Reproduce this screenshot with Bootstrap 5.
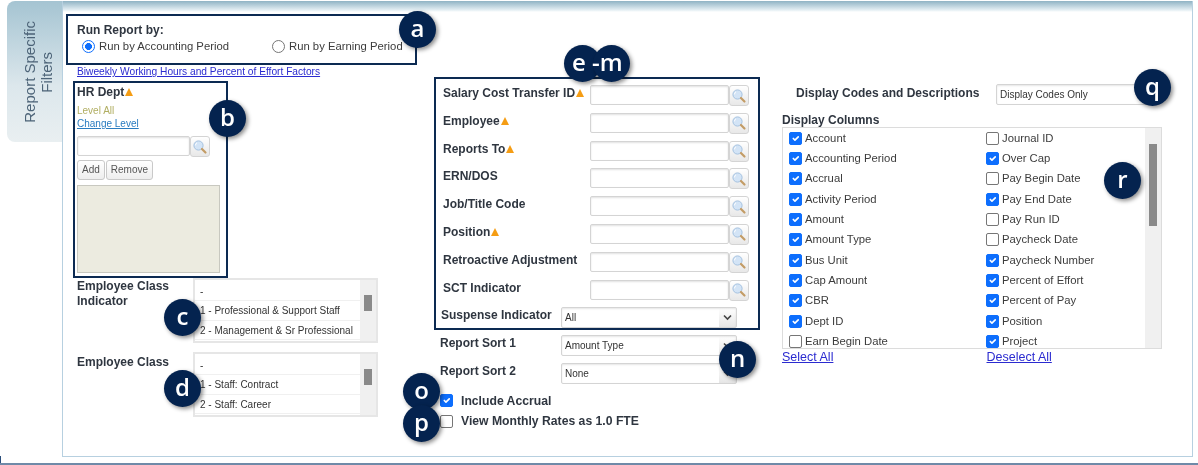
<!DOCTYPE html>
<html lang="en"><head><meta charset="utf-8"><title>Report Specific Filters</title>
<link rel="stylesheet" href="https://cdn.jsdelivr.net/npm/bootstrap@5.3.0/dist/css/bootstrap.min.css">
<style>
html,body{height:465px;overflow:hidden;background:#fff}
body{font-family:"Liberation Sans",Arial,sans-serif;font-size:11px;color:#3c3c3c;position:relative}
.stage{height:465px;border-bottom:2px solid #6f8aa8;display:flex;padding:1px 5px 0 7px;align-items:flex-start;position:relative;filter:blur(.3px)}
.stage::after{content:"";position:absolute;left:0;bottom:0;width:1px;height:7px;background:#2c4f7c}
.side-tab{width:55px;height:141px;border-radius:8px 0 0 8px;background:linear-gradient(#a5c4d2,#dce7ec 60%,#e9eff1);display:flex;align-items:center;justify-content:center;padding-left:6px}
.side-tab span{writing-mode:vertical-rl;transform:rotate(180deg);text-align:center;font-size:15px;line-height:17px;color:#4d6478}
.panel{flex:1;height:456px;border:1px solid #b7d0e0;border-top:0;position:relative;display:flex;background:linear-gradient(#8fb3c4,#e4eef3 9px,#fff 11px)}
.col-a{width:371px;padding:13px 0 0 3px}
.col-b{width:348px;padding-top:76px}
.col-c{flex:1;padding-top:83px}
.navy-box{border:2px solid #0c2a52;background:#fff}
.box-run{width:351px;height:51px;padding:7px 9px}
.heading{font-weight:700;font-size:12px;color:#2f3640;line-height:14px}
.radio-row{display:flex;font-size:11.3px;line-height:16px;margin-top:1px}
.radio-row label{display:flex;align-items:center;gap:4px}
.radio-row label:first-child{width:195px;padding-left:5px}
.form-check-input.tick{width:13px;height:13px;margin:0;flex:none;border:1.5px solid #767676;border-radius:2px}
.form-check-input.tick:checked{background-color:#0d6efd;border-color:#0d6efd}
.form-check-input.dot{width:13px;height:13px;margin:0;flex:none;border:1.5px solid #767676}
.form-check-input.dot:checked{background-color:#fff;border-color:#0d6efd;background-image:radial-gradient(circle,#0d6efd 3.2px,transparent 3.7px)}
.link-top{display:block;margin:0 0 0 11px;font-size:10.2px;line-height:13px;color:#2b2bd0}
.box-dept{width:155px;height:197px;margin:3px 0 0 7px;padding:2px 2px}
.warn{display:inline-block;width:0;height:0;border-left:4.5px solid transparent;border-right:4.5px solid transparent;border-bottom:8px solid #f59d14;margin-left:1px}
.level{color:#b1ae62;font-size:10px;line-height:12px;margin-top:6px}
.change{display:block;color:#2a7cc0;font-size:10px;line-height:13px}
.lookup{display:flex;margin-top:6px}
.field{width:113px;height:20px;border:1px solid #d4d4d4;border-radius:2px;padding:0 3px;box-shadow:inset 0 1px 2px rgba(0,0,0,.12);font-size:11px}
.mag-btn{width:20px;height:21px;padding:0;border:1px solid #d4d4d4;border-radius:3px;background:linear-gradient(#fff,#e8e8e8);display:flex;align-items:center;justify-content:center}
.action-row{display:flex;margin-top:3px}
.btn.act{height:20px;padding:0 4px;font-size:10px;line-height:18px;color:#555;border:1px solid #c9c9c9;border-radius:3px;background:linear-gradient(#fff,#eee)}
.btn.act+.btn.act{margin-left:1px}
.pick-area{width:143px;height:88px;margin-top:5px;background:#ecebe0;border:1px solid #c8c8c0}
.class-row{display:flex;margin:0 0 0 11px}
.class-row+.class-row{margin-top:9px}
.class-row .heading{width:116px;line-height:15px;padding-top:1px}
.class-row+.class-row .heading{padding-top:3px}
.listbox{width:185px;height:65px;border:2px solid #e6e6e6;display:flex;font-size:10px;color:#333;overflow:hidden}
.listbox ul{flex:1;margin:0;padding:2px 0 0;list-style:none;white-space:nowrap}
.listbox li{height:19.4px;line-height:19px;padding-left:5px;border-bottom:1.5px solid #f0f0f0}
.track{width:16px;background:#f0f0f0;padding:15px 4px 0 4px}
.thumb{width:8px;background:#8a8a8a}
.box-fields{width:326px;height:253px;padding:6px 0 0 7px}
.frow{display:flex;align-items:flex-start;height:27.8px}
.frow .heading{width:147px;padding-top:1px;white-space:nowrap}
.frow .field{width:139px;border-radius:2px}
.frow .heading.short{width:120px;margin-left:-2px}
.srow{display:flex;align-items:flex-start;height:27.8px;padding-left:6px}
.srow .heading{width:121px;padding-top:1px;white-space:nowrap}
.form-select.pick{width:176px;height:21px;padding:0 0 0 3px;border:1px solid #d4d4d4;border-radius:2px;font-size:10px;color:#333;font-family:inherit;box-shadow:inset 0 1px 2px rgba(0,0,0,.1);background-repeat:no-repeat;background-size:9px 7px,17px 100%;background-position:right 4px center,right center;background-image:url("data:image/svg+xml,%3csvg xmlns='http://www.w3.org/2000/svg' viewBox='0 0 9 7'%3e%3cpath fill='none' stroke='%23444' stroke-width='1.6' d='M1 1.5l3.5 3.5L8 1.5'/%3e%3c/svg%3e"),linear-gradient(#fff,#e6e6e6)}
.below{margin-top:5px}
.checks{margin:0 0 0 6px}
.checks label{display:flex;align-items:center;gap:8px;height:20.5px;font-weight:700;font-size:12.2px;color:#2f3640}
.codes{display:flex;align-items:flex-start;padding-left:14px}
.codes .heading{width:200px;padding-top:2px}
.codes .form-select{width:155px;background-image:none}
.colhead{margin-top:9px;line-height:13px}
.colbox{width:380px;height:222px;border:1px solid #dcdcdc;display:flex;overflow:hidden}
.colgrid{flex:1;display:grid;grid-template-columns:197px 1fr;grid-auto-rows:20.35px;padding:0 0 0 6px;font-size:11.3px}
.colgrid label{display:flex;align-items:center;gap:3px;white-space:nowrap}
.colbox .track{padding:16px 3px 0 4px}
.colbox .thumb{height:82px}
.sel-links{display:flex;font-size:12.5px;line-height:16px}
.sel-links a{color:#2b2bd0;width:204.5px}
.bub{position:absolute;width:37px;height:37px;border-radius:50%;background:#04234f;color:#fff;font-family:"Open Sans","Liberation Sans",sans-serif;font-weight:600;font-size:24px;line-height:33px;text-align:center;box-shadow:2px 2px 4px rgba(0,0,0,.45);z-index:3}
.bub-text{position:absolute;z-index:4;color:#fff;font-family:"Open Sans","Liberation Sans",sans-serif;font-weight:600;font-size:24px;line-height:33px;white-space:nowrap}
</style></head>
<body>
<svg width="0" height="0" class="position-absolute"><defs><symbol id="mag" viewBox="0 0 16 16"><circle cx="6.5" cy="6.5" r="4.6" fill="#d3e4f6" stroke="#a5c2e0"/><path d="M5 3.8a3 2.6 0 0 0-1.4 2.6" fill="none" stroke="#fff"/><path d="M10 10L13.5 13.5" stroke="#c39c66" stroke-width="2.2" stroke-linecap="round"/></symbol></defs></svg>
<div class="stage">
 <div class="side-tab"><span>Report Specific<br>Filters</span></div>
 <main class="panel">
  <section class="col-a">
   <div class="navy-box box-run">
    <div class="heading">Run Report by:</div>
    <div class="radio-row">
     <label><input class="form-check-input dot" type="radio" name="rp" checked>Run by Accounting Period</label>
     <label><input class="form-check-input dot" type="radio" name="rp">Run by Earning Period</label>
    </div>
   </div>
   <a class="link-top" href="#">Biweekly Working Hours and Percent of Effort Factors</a>
   <div class="navy-box box-dept">
    <div class="heading">HR Dept<span class="warn"></span></div>
    <div class="level">Level All</div>
    <a class="change" href="#">Change Level</a>
    <div class="lookup"><input class="field" type="text"><button class="mag-btn" type="button"><svg width="16" height="16"><use href="#mag"/></svg></button></div>
    <div class="action-row"><button class="btn act" type="button">Add</button><button class="btn act" type="button">Remove</button></div>
    <div class="pick-area"></div>
   </div>
   <div class="class-row">
    <div class="heading">Employee Class Indicator</div>
    <div class="listbox"><ul><li>-</li><li>1 - Professional &amp; Support Staff</li><li>2 - Management &amp; Sr Professional</li></ul><div class="track"><div class="thumb" style="height:16px"></div></div></div>
   </div>
   <div class="class-row">
    <div class="heading">Employee Class</div>
    <div class="listbox"><ul><li>-</li><li>1 - Staff: Contract</li><li>2 - Staff: Career</li></ul><div class="track"><div class="thumb" style="height:16px"></div></div></div>
   </div>
  </section>
  <section class="col-b">
   <div class="navy-box box-fields">
    <div class="frow"><div class="heading">Salary Cost Transfer ID<span class="warn"></span></div><input class="field" type="text"><button class="mag-btn" type="button"><svg width="16" height="16"><use href="#mag"/></svg></button></div>
    <div class="frow"><div class="heading">Employee<span class="warn"></span></div><input class="field" type="text"><button class="mag-btn" type="button"><svg width="16" height="16"><use href="#mag"/></svg></button></div>
    <div class="frow"><div class="heading">Reports To<span class="warn"></span></div><input class="field" type="text"><button class="mag-btn" type="button"><svg width="16" height="16"><use href="#mag"/></svg></button></div>
    <div class="frow"><div class="heading">ERN/DOS</div><input class="field" type="text"><button class="mag-btn" type="button"><svg width="16" height="16"><use href="#mag"/></svg></button></div>
    <div class="frow"><div class="heading">Job/Title Code</div><input class="field" type="text"><button class="mag-btn" type="button"><svg width="16" height="16"><use href="#mag"/></svg></button></div>
    <div class="frow"><div class="heading">Position<span class="warn"></span></div><input class="field" type="text"><button class="mag-btn" type="button"><svg width="16" height="16"><use href="#mag"/></svg></button></div>
    <div class="frow"><div class="heading">Retroactive Adjustment</div><input class="field" type="text"><button class="mag-btn" type="button"><svg width="16" height="16"><use href="#mag"/></svg></button></div>
    <div class="frow"><div class="heading">SCT Indicator</div><input class="field" type="text"><button class="mag-btn" type="button"><svg width="16" height="16"><use href="#mag"/></svg></button></div>
    <div class="frow"><div class="heading short">Suspense Indicator</div><select class="form-select pick"><option>All</option></select></div>
   </div>
   <div class="below">
    <div class="srow"><div class="heading">Report Sort 1</div><select class="form-select pick"><option>Amount Type</option></select></div>
    <div class="srow"><div class="heading">Report Sort 2</div><select class="form-select pick"><option>None</option></select></div>
    <div class="checks">
     <label><input class="form-check-input tick" type="checkbox" checked>Include Accrual</label>
     <label><input class="form-check-input tick" type="checkbox">View Monthly Rates as 1.0 FTE</label>
    </div>
   </div>
  </section>
  <section class="col-c">
   <div class="codes"><div class="heading">Display Codes and Descriptions</div><select class="form-select pick"><option>Display Codes Only</option></select></div>
   <div class="heading colhead">Display Columns</div>
   <div class="colbox">
    <div class="colgrid">
     <label><input class="form-check-input tick" type="checkbox" checked>Account</label><label><input class="form-check-input tick" type="checkbox">Journal ID</label>
     <label><input class="form-check-input tick" type="checkbox" checked>Accounting Period</label><label><input class="form-check-input tick" type="checkbox" checked>Over Cap</label>
     <label><input class="form-check-input tick" type="checkbox" checked>Accrual</label><label><input class="form-check-input tick" type="checkbox">Pay Begin Date</label>
     <label><input class="form-check-input tick" type="checkbox" checked>Activity Period</label><label><input class="form-check-input tick" type="checkbox" checked>Pay End Date</label>
     <label><input class="form-check-input tick" type="checkbox" checked>Amount</label><label><input class="form-check-input tick" type="checkbox">Pay Run ID</label>
     <label><input class="form-check-input tick" type="checkbox" checked>Amount Type</label><label><input class="form-check-input tick" type="checkbox">Paycheck Date</label>
     <label><input class="form-check-input tick" type="checkbox" checked>Bus Unit</label><label><input class="form-check-input tick" type="checkbox" checked>Paycheck Number</label>
     <label><input class="form-check-input tick" type="checkbox" checked>Cap Amount</label><label><input class="form-check-input tick" type="checkbox" checked>Percent of Effort</label>
     <label><input class="form-check-input tick" type="checkbox" checked>CBR</label><label><input class="form-check-input tick" type="checkbox" checked>Percent of Pay</label>
     <label><input class="form-check-input tick" type="checkbox" checked>Dept ID</label><label><input class="form-check-input tick" type="checkbox" checked>Position</label>
     <label><input class="form-check-input tick" type="checkbox">Earn Begin Date</label><label><input class="form-check-input tick" type="checkbox" checked>Project</label>
    </div>
    <div class="track"><div class="thumb"></div></div>
   </div>
   <div class="sel-links"><a href="#">Select All</a><a href="#">Deselect All</a></div>
  </section>
  <div class="bub" style="left:336px;top:10px">a</div>
  <div class="bub" style="left:146px;top:99px">b</div>
  <div class="bub" style="left:101px;top:298px">c</div>
  <div class="bub" style="left:101px;top:369px">d</div>
  <div class="bub" style="left:501px;top:44px"></div>
  <div class="bub" style="left:530px;top:44px"></div>
  <div class="bub-text" style="left:509px;top:44px">e -m</div>
  <div class="bub" style="left:656px;top:340px">n</div>
  <div class="bub" style="left:340px;top:372px">o</div>
  <div class="bub" style="left:340px;top:404px">p</div>
  <div class="bub" style="left:1071px;top:68px">q</div>
  <div class="bub" style="left:1041px;top:161px">r</div>
 </main>
</div>
</body></html>
